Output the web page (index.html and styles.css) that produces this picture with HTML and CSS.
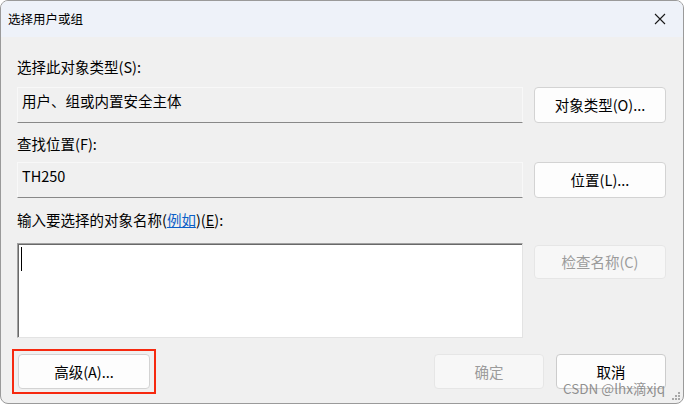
FILE: index.html
```html
<!DOCTYPE html>
<html lang="zh-CN">
<head>
<meta charset="utf-8">
<title>选择用户或组</title>
<link rel="stylesheet" href="styles.css">
</head>
<body>
<div class="window">
  <div class="titlebar">
    <span class="title">选择用户或组</span>
    <span class="close">
      <svg width="12" height="12" viewBox="0 0 12 12"><path d="M1 1 L11 11 M11 1 L1 11" stroke="#1a1a1a" stroke-width="1.1" fill="none"/></svg>
    </span>
  </div>
  <div class="content">
    <div class="label label-first">选择此对象类型(S):</div>
    <div class="row">
      <div class="field">用户、组或内置安全主体</div>
      <button class="btn">对象类型(O)...</button>
    </div>
    <div class="label label-second">查找位置(F):</div>
    <div class="row">
      <div class="field">TH250</div>
      <button class="btn">位置(L)...</button>
    </div>
    <div class="label label-third">输入要选择的对象名称(<a class="link" href="#">例如</a>)(<u>E</u>):</div>
    <div class="row row-names">
      <div class="names"><span class="caret"></span></div>
      <button class="btn btn-disabled btn-check">检查名称(C)</button>
    </div>
    <div class="actions">
      <div class="highlight">
        <button class="btn btn-advanced">高级(A)...</button>
      </div>
      <button class="btn btn-disabled btn-ok">确定</button>
      <button class="btn btn-cancel">取消</button>
    </div>
  </div>
  <div class="watermark">CSDN @lhx滴xjq</div>
  <div class="grip">
    <i class="d1"></i><i class="d2"></i><i class="d3"></i>
    <i class="d4"></i><i class="d5"></i><i class="d6"></i>
  </div>
</div>
</body>
</html>
```
FILE: styles.css
```css
html, body {
  margin: 0;
  padding: 0;
  background: #ffffff;
}
body {
  font-family: "Noto Sans CJK SC", "Noto Sans", sans-serif;
  color: #000;
}
.window {
  position: relative;
  box-sizing: border-box;
  width: 684px;
  height: 404px;
  border: 1px solid #9a9a9a;
  border-radius: 8px;
  background: #f0f0f0;
  overflow: hidden;
}
.titlebar {
  height: 36px;
  background: #eef2f9;
  display: flex;
  align-items: center;
  justify-content: space-between;
  padding: 0 0 0 7px;
}
.title {
  font-size: 12.5px;
  line-height: 16px;
}
.close {
  width: 46px;
  height: 36px;
  display: flex;
  align-items: center;
  justify-content: center;
  padding-left: 6px;
}
.content {
  padding: 20px 17px 0 16px;
  display: flex;
  flex-direction: column;
}
.label {
  font-size: 14.5px;
  line-height: 20px;
  height: 20px;
  white-space: nowrap;
}
.label-first { margin-bottom: 10px; }
.label-second { margin-top: 11px; margin-bottom: 8px; }
.label-third { margin-top: 12px; margin-bottom: 13px; }
.link {
  color: #0b5fc7;
  text-decoration: underline;
}
.row {
  display: grid;
  grid-template-columns: 506px 132px;
  column-gap: 11px;
  height: 36px;
}
.field {
  box-sizing: border-box;
  height: 36px;
  border: 1px solid #f8f8f8;
  border-bottom: 1px solid #888888;
  background: #f0f0f0;
  padding: 3px 4px 0 4px;
  font-size: 14.5px;
  line-height: 20px;
  white-space: nowrap;
}
.btn {
  box-sizing: border-box;
  height: 36px;
  margin: 0;
  padding: 0;
  border: 1px solid #d3d3d3;
  border-radius: 4px;
  background: #fdfdfd;
  font-family: "Noto Sans CJK SC", "Noto Sans", sans-serif;
  font-size: 14.5px;
  line-height: 20px;
  color: #000;
  white-space: nowrap;
}
.btn-disabled {
  background: #f7f7f7;
  border-color: #e6e6e6;
  color: #9b9b9b;
}
.row-names {
  height: 95px;
}
.names {
  box-sizing: border-box;
  height: 95px;
  background: #ffffff;
  border-top: 1px solid #a0a0a0;
  border-left: 1px solid #a0a0a0;
  border-right: 1px solid #e3e3e3;
  border-bottom: 1px solid #e3e3e3;
  box-shadow: inset 1px 1px 0 #696969;
  padding: 3px 0 0 3px;
}
.caret {
  display: block;
  width: 1px;
  height: 24px;
  background: #000;
}
.btn-check {
  height: 34px;
  margin-top: 2px;
}
.actions {
  display: flex;
  align-items: center;
  margin-top: 11px;
}
.actions .btn {
  height: 35px;
}
.highlight {
  display: flex;
  margin-left: -5px;
  padding: 3px 4px;
  border: 2px solid #f6290f;
}
.btn-advanced {
  width: 132px;
}
.btn-ok {
  width: 110px;
  margin-left: auto;
}
.btn-cancel {
  width: 110px;
  margin-left: 12px;
  border-color: #cccccc;
}
.watermark {
  position: absolute;
  left: 562px;
  top: 381px;
  font-size: 13.5px;
  line-height: 13px;
  color: rgba(110, 110, 110, 0.75);
  white-space: nowrap;
}
.grip {
  position: absolute;
  right: 2px;
  bottom: 2px;
  width: 9px;
  height: 9px;
}
.grip i {
  position: absolute;
  width: 2px;
  height: 2px;
  background: #a8a8a8;
}
.grip .d1 { left: 6px; top: 0; }
.grip .d2 { left: 3px; top: 3px; }
.grip .d3 { left: 6px; top: 3px; }
.grip .d4 { left: 0; top: 6px; }
.grip .d5 { left: 3px; top: 6px; }
.grip .d6 { left: 6px; top: 6px; }
```
